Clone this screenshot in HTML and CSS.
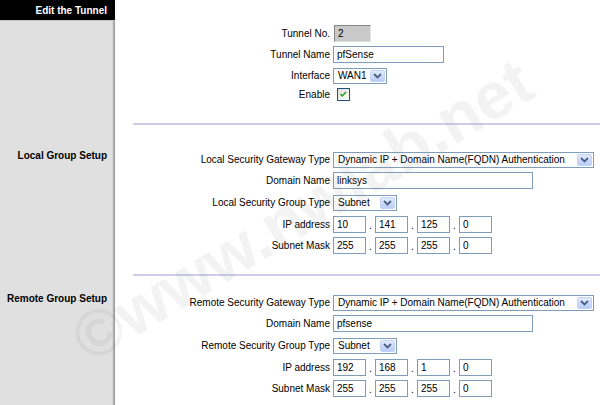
FILE: index.html
```html
<!DOCTYPE html>
<html>
<head>
<meta charset="utf-8">
<title>Edit the Tunnel</title>
<link rel="stylesheet" href="styles.css">
</head>
<body>
<div class="page">
  <section class="sec sec-a">
    <div class="side"><div class="side-head">Edit the Tunnel</div></div>
    <div class="main">
      <div class="row"><span class="lbl">Tunnel No.</span><span class="txt txt-dis w-no">2</span></div>
      <div class="row"><span class="lbl">Tunnel Name</span><span class="txt w-name">pfSense</span></div>
      <div class="row"><span class="lbl">Interface</span>
        <span class="combo w-if"><span class="combo-val">WAN1</span><span class="combo-btn"><svg viewBox="0 0 9 6" width="9" height="6"><path d="M1 1l3.5 3.5L8 1" fill="none" stroke="#4d6185" stroke-width="1.8"/></svg></span></span>
      </div>
      <div class="row row-chk"><span class="lbl">Enable</span>
        <span class="chk"><svg viewBox="0 0 13 13" width="11" height="11"><path d="M3 6l2 2.2L9.5 3.5" fill="none" stroke="#21a121" stroke-width="1.8"/></svg></span>
      </div>
      <div class="rule"></div>
    </div>
  </section>

  <section class="sec sec-b">
    <div class="side"><div class="side-title">Local Group Setup</div></div>
    <div class="main">
      <div class="row"><span class="lbl">Local Security Gateway Type</span>
        <span class="combo w-gw"><span class="combo-val">Dynamic IP + Domain Name(FQDN) Authentication</span><span class="combo-btn"><svg viewBox="0 0 9 6" width="9" height="6"><path d="M1 1l3.5 3.5L8 1" fill="none" stroke="#4d6185" stroke-width="1.8"/></svg></span></span>
      </div>
      <div class="row"><span class="lbl">Domain Name</span><span class="txt w-dom">linksys</span></div>
      <div class="row row-tall"><span class="lbl">Local Security Group Type</span>
        <span class="combo w-grp"><span class="combo-val">Subnet</span><span class="combo-btn"><svg viewBox="0 0 9 6" width="9" height="6"><path d="M1 1l3.5 3.5L8 1" fill="none" stroke="#4d6185" stroke-width="1.8"/></svg></span></span>
      </div>
      <div class="row"><span class="lbl">IP address</span>
        <span class="ip"><span class="txt w-ip">10</span><span class="dot">.</span><span class="txt w-ip">141</span><span class="dot">.</span><span class="txt w-ip">125</span><span class="dot">.</span><span class="txt w-ip">0</span></span>
      </div>
      <div class="row"><span class="lbl">Subnet Mask</span>
        <span class="ip"><span class="txt w-ip">255</span><span class="dot">.</span><span class="txt w-ip">255</span><span class="dot">.</span><span class="txt w-ip">255</span><span class="dot">.</span><span class="txt w-ip">0</span></span>
      </div>
      <div class="rule"></div>
    </div>
  </section>

  <section class="sec sec-c">
    <div class="side"><div class="side-title">Remote Group Setup</div></div>
    <div class="main">
      <div class="row"><span class="lbl">Remote Security Gateway Type</span>
        <span class="combo w-gw"><span class="combo-val">Dynamic IP + Domain Name(FQDN) Authentication</span><span class="combo-btn"><svg viewBox="0 0 9 6" width="9" height="6"><path d="M1 1l3.5 3.5L8 1" fill="none" stroke="#4d6185" stroke-width="1.8"/></svg></span></span>
      </div>
      <div class="row"><span class="lbl">Domain Name</span><span class="txt w-dom">pfsense</span></div>
      <div class="row row-tall"><span class="lbl">Remote Security Group Type</span>
        <span class="combo w-grp"><span class="combo-val">Subnet</span><span class="combo-btn"><svg viewBox="0 0 9 6" width="9" height="6"><path d="M1 1l3.5 3.5L8 1" fill="none" stroke="#4d6185" stroke-width="1.8"/></svg></span></span>
      </div>
      <div class="row"><span class="lbl">IP address</span>
        <span class="ip"><span class="txt w-ip">192</span><span class="dot">.</span><span class="txt w-ip">168</span><span class="dot">.</span><span class="txt w-ip">1</span><span class="dot">.</span><span class="txt w-ip">0</span></span>
      </div>
      <div class="row"><span class="lbl">Subnet Mask</span>
        <span class="ip"><span class="txt w-ip">255</span><span class="dot">.</span><span class="txt w-ip">255</span><span class="dot">.</span><span class="txt w-ip">255</span><span class="dot">.</span><span class="txt w-ip">0</span></span>
      </div>
    </div>
  </section>

  <div class="wm">©www.nwlab.net</div>
</div>
</body>
</html>
```

FILE: styles.css
```css
html, body {
  margin: 0;
  padding: 0;
  height: 100%;
}

body {
  font-family: "Liberation Sans", Arial, sans-serif;
  font-size: 10px;
  color: #000;
  background: #fff;
}

.page {
  position: relative;
  min-height: 100vh;
  display: flex;
  flex-direction: column;
  overflow: hidden;
}

.sec {
  display: flex;
}

.sec-c {
  flex: 1;
}

.side {
  width: 115px;
  flex: none;
  box-sizing: border-box;
  background: #e0e0e0;
  box-shadow: inset -1px 0 #9c9c9c, inset -2px 0 #b4b4b4, inset -3px 0 #d2d2d2;
}

.side-head {
  height: 20px;
  background: #000;
  color: #fff;
  font-weight: bold;
  text-align: right;
  padding-right: 8px;
  line-height: 21px;
  border-bottom: 1px solid #c4c4c4;
}

.side-title {
  font-weight: bold;
  text-align: right;
  padding-right: 8px;
  line-height: 13px;
  white-space: nowrap;
}

.sec-b .side-title { padding-top: 24px; }
.sec-c .side-title { padding-top: 16px; }

.main {
  flex: 1;
}

.sec-a .main { padding-top: 23px; }
.sec-b .main { padding-top: 24px; }
.sec-c .main { padding-top: 16px; }

.row {
  display: grid;
  grid-template-columns: 215px auto;
  column-gap: 3px;
  align-items: center;
  justify-items: start;
  height: 21px;
}

.row-tall { height: 23px; }
.row-chk { height: 17px; }

.lbl {
  justify-self: end;
  white-space: nowrap;
}

.txt {
  display: block;
  box-sizing: border-box;
  height: 17px;
  border: 1px solid #7f9db9;
  background: #fff;
  padding-left: 3px;
  line-height: 15px;
  white-space: nowrap;
}

.txt-dis {
  background: #c9c9c9;
  border-color: #858585 #e2e2e2 #e2e2e2 #858585;
  margin-left: 1px;
}

.w-no { width: 37px; }
.w-name { width: 111px; }
.w-dom { width: 200px; }
.w-ip { width: 33px; }

.combo {
  display: flex;
  box-sizing: border-box;
  height: 16px;
  border: 1px solid #7f9db9;
  background: #fff;
  padding: 1px;
}

.w-if { width: 54px; }
.w-gw { width: 261px; }
.w-grp { width: 64px; }

.combo-val {
  flex: 1;
  padding-left: 3px;
  line-height: 12px;
  white-space: nowrap;
  overflow: hidden;
}

.combo-btn {
  width: 15px;
  box-sizing: border-box;
  display: flex;
  align-items: center;
  justify-content: center;
  background: linear-gradient(#e2eafd, #b9cdf7);
  border: 1px solid #c3d3f6;
  border-radius: 2px;
}

.chk {
  display: flex;
  align-items: center;
  justify-content: center;
  box-sizing: border-box;
  width: 13px;
  height: 13px;
  margin-left: 4px;
  border: 1px solid #1c5180;
  background: linear-gradient(135deg, #dcdcd7, #fff);
}

.ip {
  display: flex;
  align-items: center;
}

.dot {
  width: 9px;
  text-align: center;
  line-height: 17px;
  padding-top: 2px;
}

.rule {
  height: 2px;
  margin-left: 18px;
  background: #cdcdea;
}

.sec-a .rule { margin-top: 20px; }
.sec-b .rule { margin-top: 18px; }

.wm {
  position: absolute;
  left: 302px;
  top: 210px;
  transform: translate(-50%, -50%) rotate(-31deg);
  font-family: "Liberation Sans", Arial, sans-serif;
  font-weight: bold;
  font-size: 66px;
  white-space: nowrap;
  color: rgba(120, 120, 120, 0.09);
  pointer-events: none;
}
```
